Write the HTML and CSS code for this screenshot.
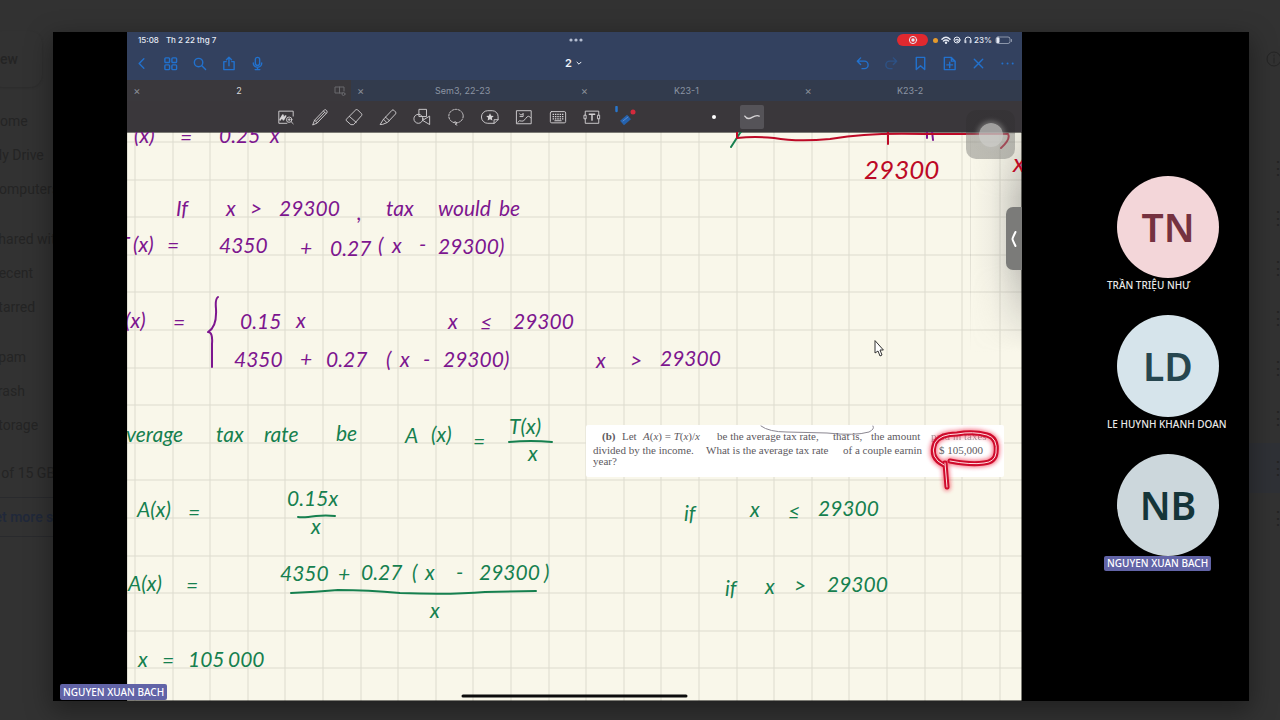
FILE: index.html
```html
<!DOCTYPE html>
<html lang="vi">
<head>
<meta charset="utf-8">
<title>Meeting recording</title>
<link rel="stylesheet" href="styles.css">
</head>
<body>
<div class="drive">
  <nav class="drive-nav">
    <button class="drive-new">New</button>
    <a href="#">Home</a>
    <a href="#">My Drive</a>
    <a href="#">Computers</a>
    <a href="#" class="group">Shared with me</a>
    <a href="#">Recent</a>
    <a href="#">Starred</a>
    <a href="#" class="group">Spam</a>
    <a href="#">Trash</a>
    <a href="#">Storage</a>
    <div class="quota">2 of 15 GB used</div>
    <button class="drive-more">Get more storage</button>
  </nav>
  <div class="drive-rows">
    <svg class="info" viewBox="0 0 16 16"><circle cx="8" cy="8" r="7"/><path d="M8 7v5M8 4v1"/></svg>
    <div class="row">⋮</div><div class="row">⋮</div><div class="row">⋮</div><div class="row">⋮</div>
    <div class="row">⋮</div><div class="row">⋮</div><div class="row selected">⋮</div><div class="row">⋮</div>
  </div>
</div>

<main class="stage">
  <section class="tablet">
    <header class="top">
      <div class="status">
        <span class="clock"><span>15:08</span><span>Th 2 22 thg 7</span></span>
        <svg class="dots" viewBox="0 0 14 4"><circle cx="2" cy="2" r="1.6"/><circle cx="7" cy="2" r="1.6"/><circle cx="12" cy="2" r="1.6"/></svg>
        <span class="indicators">
          <span class="rec"><svg viewBox="0 0 10 10"><circle cx="5" cy="5" r="3.6"/><circle class="fill" cx="5" cy="5" r="1.7"/></svg></span>
          <span class="mic-on"></span>
          <svg viewBox="0 0 10 10"><path d="M1 4.2C3.400 1.900 6.600 1.900 9 4.200M2.500 6C4 4.700 6 4.700 7.500 6" stroke-width="1.500"/><circle class="fill" cx="5" cy="7.700" r="1.200"/></svg>
          <svg viewBox="0 0 10 10"><circle cx="5" cy="5" r="3"/><path d="M3.800 5.400v-1h2.400v2H5"/></svg>
          <svg viewBox="0 0 10 10"><path d="M2 7.500V5a3 3 0 0 1 6 0v2.500M2.800 5.600v2.200M7.200 5.600v2.200"/></svg>
          <span>23%</span>
          <svg class="battery" viewBox="0 0 18 10"><rect x="1" y="2" width="14" height="6.500" rx="2" opacity=".5"/><rect class="fill" x="1.500" y="2.500" width="3" height="5.500" rx="1"/><path d="M16.500 4.500v2" opacity=".5"/></svg>
        </span>
      </div>
      <div class="nav">
        <div class="nav-group">
          <button aria-label="Back"><svg viewBox="0 0 16 16"><path d="M10.500 3 5.500 8l5 5"/></svg></button>
          <button aria-label="Pages"><svg viewBox="0 0 16 16"><rect x="2" y="2" width="5" height="5" rx="1"/><rect x="9.500" y="2" width="5" height="5" rx="1"/><rect x="2" y="9.500" width="5" height="5" rx="1"/><rect x="9.500" y="9.500" width="5" height="5" rx="1"/></svg></button>
          <button aria-label="Search"><svg viewBox="0 0 16 16"><circle cx="7" cy="7" r="4.500"/><path d="m10.500 10.500 4 4"/></svg></button>
          <button aria-label="Share"><svg viewBox="0 0 16 16"><path d="M5.500 6H3v8.500h11V6h-2.500M8.500 10.500V1.500M5.800 4l2.700-2.700L11.200 4"/></svg></button>
          <button aria-label="Record"><svg viewBox="0 0 16 16"><rect x="5.700" y="1.500" width="4.600" height="8.500" rx="2.300"/><path d="M3.500 7.500a4.500 4.500 0 0 0 9 0M8 12v2.500M5.500 14.500h5"/></svg></button>
        </div>
        <button class="doc-title">2 <svg viewBox="0 0 8 8"><path d="m2 3.200 2 2 2-2"/></svg></button>
        <div class="nav-group">
          <button aria-label="Undo"><svg viewBox="0 0 16 16"><path d="M6 2 2.500 5.500 6 9M2.500 5.500H10a3.800 3.800 0 0 1 0 8H7.500"/></svg></button>
          <button aria-label="Redo" class="off"><svg viewBox="0 0 16 16"><path d="m10 2 3.500 3.500L10 9M13.500 5.500H6a3.800 3.800 0 0 0 0 8h2.500"/></svg></button>
          <button aria-label="Bookmark"><svg viewBox="0 0 16 16"><path d="M3.500 1.500h9v13L8 10.500l-4.500 4z"/></svg></button>
          <button aria-label="Add page"><svg viewBox="0 0 16 16"><path d="M2.500 1.500h7.500L14 5.500v9H2.500zM10 1.500v4h4M8.200 6.500v6M5.200 9.500h6"/></svg></button>
          <button aria-label="Close"><svg viewBox="0 0 16 16"><path d="m3.500 3.500 9 9M12.500 3.500l-9 9"/></svg></button>
          <button aria-label="More"><svg viewBox="0 0 16 16"><path class="more" d="M2.500 8h.1M8 8h.1M13.500 8h.1"/></svg></button>
        </div>
      </div>
    </header>

    <div class="tabs">
      <div class="tab active"><button class="x" aria-label="Close tab">×</button><button class="name">2</button><svg class="split" viewBox="0 0 12 10"><path d="M9 7H1V1h9v4M5.500 1v6"/><circle cx="9.500" cy="8" r="1.500"/></svg></div>
      <div class="tab"><button class="x" aria-label="Close tab">×</button><button class="name">Sem3, 22-23</button></div>
      <div class="tab"><button class="x" aria-label="Close tab">×</button><button class="name">K23-1</button></div>
      <div class="tab"><button class="x" aria-label="Close tab">×</button><button class="name">K23-2</button></div>
    </div>

    <div class="tools">
      <button aria-label="Zoom window"><svg viewBox="0 0 20 20"><path d="M18 9V3.500H2V17h9"/><path d="m3.500 13 3-5 .500 5 2.500-4" stroke-width="2"/><circle cx="13.500" cy="13" r="3"/><path d="M12.200 13h2.600M13.500 11.700v2.600M16 15.500l2 2"/></svg></button>
      <button aria-label="Pen"><svg viewBox="0 0 20 20"><path d="m2 18.500 2-5L15 2q1.500-.500 2.500 1T17.500 5.500L7 16.500zM4 13.500l3 3M14 3.500l2.500 2.500M6 14.500l9-9.500"/></svg></button>
      <button aria-label="Eraser"><svg viewBox="0 0 20 20"><path d="M1.500 12.500 12 2q1-.500 2 0l4.500 4.500q.500 1 0 1.800L9.500 18.500H6.500L1.500 14zM5 9.500l7.500 6.500"/></svg></button>
      <button aria-label="Highlighter"><svg viewBox="0 0 20 20"><path d="m1.500 18 3.500-5.500L14.500 2.500q1-1 2 0l2 2q.500 1 0 2L9.500 16l-5 2zM5 12.500 8.500 16M7 10l4.500 4"/></svg></button>
      <button aria-label="Shapes"><svg viewBox="0 0 20 20"><rect x="7" y="1.500" width="8" height="8"/><circle cx="6" cy="12" r="5"/><path d="m11 13.500 7.500-4.500v9z"/></svg></button>
      <button aria-label="Lasso"><svg viewBox="0 0 20 20"><ellipse cx="10" cy="9" rx="8" ry="7.500" stroke-dasharray="2 1.500"/><path d="M7.500 16q2-1.500 3 0t-1 1.500 1.500 1.500"/></svg></button>
      <button aria-label="Elements"><svg viewBox="0 0 20 20"><path d="M14.500 17H7.500a6.500 6.500 0 0 1 0-14h5a6.500 6.500 0 0 1 6.500 6.500v3zM14.500 17v-4h4.500"/><path class="fill" d="m10 5.800 1.300 2.700 2.900.400-2.100 2 .500 2.900-2.600-1.400-2.600 1.400.500-2.900-2.100-2 2.900-.400z"/></svg></button>
      <button aria-label="Image"><svg viewBox="0 0 20 20"><rect x="2" y="3" width="16" height="14.500"/><path d="M3 16q2-3 4-1.500t5-3 5.500-.500M5 6.500q1 3 3.500.500M9 6v3.500H5.500"/></svg></button>
      <button aria-label="Keyboard"><svg viewBox="0 0 20 20"><rect x="1.500" y="4" width="17" height="12.500" rx="1.500"/><path d="M4 7h12M4 9.500h12M4 12h12" stroke-width="1.500" stroke-linecap="butt" stroke-dasharray="1.600 1"/><path d="M6.500 14.200h7" stroke-width="1.200"/></svg></button>
      <button aria-label="Text"><svg viewBox="0 0 20 20"><path d="M2.500 8V3.500h15V8M2.500 12v5h15v-5M1.500 8h2v4h-2zM16.500 8h2v4h-2z"/><path d="M7 7h6M10 7v6.500" stroke-width="1.600"/></svg></button>
      <button aria-label="Laser pointer"><svg class="laser" viewBox="0 0 22 22"><path d="m7 17 7-6" stroke="#2562ad" stroke-width="6" stroke-linecap="butt"/><path d="m8 15 5-4" stroke="#5a8bd0" stroke-width="1"/><circle cx="18" cy="6" r="2.500" fill="#d42a3c" stroke="none"/><path d="m1.500 1v4" stroke="#2876cc" stroke-width="2.500"/></svg></button>
      <button class="dot" aria-label="Dot"><span></span></button>
      <button class="trail" aria-label="Trail"><svg viewBox="0 0 20 20"><path d="M2 9q3 4.500 8 1.500t8-1.500" stroke-width="1.500"/></svg></button>
    </div>

    <div class="canvas">
      <svg class="page" viewBox="127 132 895 569" preserveAspectRatio="xMinYMin slice">
        <defs>
          <pattern id="grid" x="135" y="142" width="188" height="188" patternUnits="userSpaceOnUse">
            <path d="M0 0V188M38 0V188M75 0V188M113 0V188M150 0V188M188 0V188M0 0H188M0 38H188M0 75H188M0 113H188M0 150H188M0 188H188"/>
          </pattern>
          <linearGradient id="edge"><stop offset="0" stop-color="#888" stop-opacity="0"/><stop offset=".4" stop-color="#888" stop-opacity=".08"/><stop offset="1" stop-color="#777" stop-opacity=".4"/></linearGradient>
          <linearGradient id="fade" x2="0" y2="1"><stop offset="0" stop-color="#555"/><stop offset=".3" stop-color="#fff"/><stop offset=".6" stop-color="#fff"/><stop offset="1" stop-color="#000"/></linearGradient>
          <mask id="shade"><rect x="970" y="132" width="52" height="220" fill="url(#fade)"/></mask>
          <filter id="glow" x="-30%" y="-30%" width="160%" height="160%"><feGaussianBlur stdDeviation="2"/></filter>
        </defs>
        <rect x="127" y="132" width="895" height="569" fill="url(#grid)"/>
        <rect x="970" y="132" width="52" height="220" fill="url(#edge)" mask="url(#shade)"/>

        <g class="ink purple">
          <text x="134" y="143">(x)</text><text x="180" y="145">=</text><text x="219" y="143">0.25</text><text x="270" y="143">x</text>
          <text x="176" y="216">If</text><text x="226" y="216">x</text><text x="250" y="216">&gt;</text><text x="279" y="216">29300</text><text x="357" y="220">,</text><text x="386" y="216">tax</text><text x="438" y="216">would</text><text x="499" y="216">be</text>
          <text x="118" y="252">T</text><text x="133" y="252">(x)</text><text x="167" y="253">=</text><text x="219" y="253">4350</text><text x="300" y="256">+</text><text x="330" y="256">0.27</text><text x="378" y="253">(</text><text x="392" y="253">x</text><text x="419" y="252">-</text><text x="438" y="254">29300)</text>
          <text x="125" y="328">(x)</text><text x="173" y="330">=</text><text x="240" y="329">0.15</text><text x="296" y="328">x</text><text x="448" y="329">x</text><text x="480" y="330">≤</text><text x="513" y="329">29300</text>
          <text x="234" y="367">4350</text><text x="300" y="367">+</text><text x="326" y="367">0.27</text><text x="386" y="367">(</text><text x="400" y="367">x</text><text x="423" y="367">-</text><text x="443" y="367">29300)</text><text x="596" y="368">x</text><text x="630" y="368">&gt;</text><text x="660" y="366">29300</text>
          <path d="M218 297q-3 2-2 12 1 18-8 23 5 0 4 12v23M927 131v7M932 131l1 9"/>
        </g>
        <g class="ink green">
          <text x="126" y="442">verage</text><text x="216" y="442">tax</text><text x="264" y="442">rate</text><text x="336" y="441">be</text><text x="405" y="443">A</text><text x="431" y="442">(x)</text><text x="473" y="449">=</text><text x="509" y="434">T(x)</text><text x="528" y="461">x</text>
          <text x="137" y="517">A(x)</text><text x="188" y="520">=</text><text x="287" y="506">0.15x</text><text x="311" y="534">x</text>
          <text x="128" y="591">A(x)</text><text x="186" y="593">=</text><text x="280" y="581">4350</text><text x="338" y="582">+</text><text x="361" y="580">0.27</text><text x="412" y="580">(</text><text x="425" y="580">x</text><text x="456" y="580">-</text><text x="479" y="580">29300</text><text x="544" y="580">)</text><text x="430" y="618">x</text>
          <text x="138" y="667">x</text><text x="162" y="668">=</text><text x="188" y="667">105</text><text x="228" y="667">000</text>
          <text x="684" y="521">if</text><text x="750" y="517">x</text><text x="788" y="519">≤</text><text x="818" y="516">29300</text>
          <text x="725" y="596">if</text><text x="765" y="594">x</text><text x="794" y="593">&gt;</text><text x="827" y="592">29300</text>
          <path d="M509 442q22-2 43 0M298 517q5 1 18-1 10-1 19 0M291 593q25-1 47-3 30 0 62 3 50 2 85-1l51-1M731 147l9-14q3-4 5-2"/>
        </g>
        <g class="ink red">
          <text class="large" x="864" y="179">29300</text><text class="large" x="1013" y="172">x</text>
          <path d="M737 131v7q18-2 37 0 23 4 56 1 18-3 34-4 25-2 60-1h84q3 5-7 14M888 132v12"/>
        </g>

        <rect class="clip" x="586" y="425" width="418" height="52" rx="2"/>
        <path class="scribble" d="M761 426q8 6 26 6l40 1q28 3 42-1 6-3 4-6"/>
        <g class="print">
          <text y="440"><tspan x="602" class="label">(b)</tspan><tspan x="622">Let</tspan><tspan x="643" class="var">A</tspan>(<tspan class="var">x</tspan>) = <tspan class="var">T</tspan>(<tspan class="var">x</tspan>)/<tspan class="var">x</tspan><tspan x="717">be the average tax rate,</tspan><tspan x="833">that is,</tspan><tspan x="871">the amount</tspan></text>
          <text class="faint" x="931" y="440">paid in taxes</text>
          <text y="454"><tspan x="593">divided by the income.</tspan><tspan x="706">What is the average tax rate</tspan><tspan x="843">of a couple earnin</tspan></text>
          <text x="593" y="465">year?</text>
        </g>
        <g class="lasso">
          <path class="glow" d="M944 465q-15-7-9-22 5-9 22-9 16-3 30 1 11 3 9 18-1 9-12 10-13 2-34-2M945 463l2 24"/>
          <path class="body" d="M944 465q-15-7-9-22 5-9 22-9 16-3 30 1 11 3 9 18-1 9-12 10-13 2-34-2M945 463l2 24"/>
          <path class="core" d="M944 465q-15-7-9-22 5-9 22-9 16-3 30 1 11 3 9 18-1 9-12 10-13 2-34-2M945 463l2 24"/>
        </g>
        <g class="print"><text x="939" y="454">$ 105,000</text></g>
        <path class="home-bar" d="M463 696H686"/>
        <path class="cursor" d="M875 341v12l3-2 2 5 2-1-2-5h3z"/>
      </svg>
      <button class="drawer" aria-label="Open panel"><svg viewBox="0 0 10 20"><path d="M6.500 3q-3 6-3 7t3 7"/></svg></button>
    </div>
    <button class="assist" aria-label="Assistive touch"><span></span></button>
  </section>

  <aside class="people">
    <figure class="person rose"><div class="avatar">TN</div><figcaption>TRẦN TRIỆU NHƯ</figcaption></figure>
    <figure class="person sky"><div class="avatar">LD</div><figcaption>LE HUYNH KHANH DOAN</figcaption></figure>
    <figure class="person slate"><div class="avatar">NB</div><figcaption class="speaking">NGUYEN XUAN BACH</figcaption></figure>
  </aside>
  <div class="presenter speaking">NGUYEN XUAN BACH</div>
</main>
</body>
</html>
```
FILE: styles.css
```css
* { box-sizing: border-box; }
body {
  margin: 0;
  height: 100vh;
  overflow: hidden;
  background: #323232;
  font-family: Inter, "Liberation Sans", sans-serif;
}
button { border: 0; padding: 0; margin: 0; background: none; color: inherit; font: inherit; }
svg { display: block; fill: none; stroke: currentColor; stroke-linecap: round; stroke-linejoin: round; }

/* File list behind the player */
.drive {
  position: absolute;
  inset: 0;
  display: flex;
  justify-content: space-between;
  overflow: hidden;
  color: #242424;
  font: 14px/20px Roboto, sans-serif;
}
.drive-nav { display: flex; flex-direction: column; align-items: flex-start; gap: 14px; margin-left: -10px; padding-top: 31px; white-space: nowrap; }
.drive-nav a { color: inherit; text-decoration: none; }
.drive-nav .group { margin-top: 16px; }
.drive-new { height: 56px; width: 52px; margin-bottom: 10px; border-radius: 12px; text-align: left; font-weight: 500; box-shadow: 0 1px 2px #2c2c2c; }
.quota { margin-top: 14px; }
.drive-more { height: 40px; margin-left: -24px; padding: 0 18px; border: 1px solid #292a2d; border-radius: 20px; color: #20283a; font-weight: 500; }
.drive-rows { width: 31px; padding-top: 51px; }
.info { width: 16px; margin: 0 0 76px 17px; }
.row { height: 50px; padding-left: 20px; font-size: 18px; line-height: 50px; }
.row.selected { background: #2f3136; }

/* Player */
.stage {
  position: relative;
  display: flex;
  height: calc(100vh - 51px);
  margin: 32px 31px 19px 53px;
  padding-left: 74px;
  background: #000;
  box-shadow: 0 8px 24px 2px rgba(0, 0, 0, .35);
}
.tablet { position: relative; flex: 1; min-width: 0; display: flex; flex-direction: column; }

.top { background: #33415f; color: #e6ebf5; }
.status { display: grid; grid-template-columns: 1fr auto 1fr; align-items: center; height: 16px; padding: 0 9px 0 11px; font-size: 8px; font-weight: 500; line-height: 16px; }
.clock { display: flex; gap: 7px; }
.dots { width: 14px; color: #b4bdd0; fill: currentColor; stroke: none; }
.indicators { display: flex; justify-content: flex-end; align-items: center; gap: 1px; }
.indicators svg { width: 10px; height: 10px; }
.indicators .battery { width: 18px; margin-left: 2px; }
.fill { fill: currentColor; stroke: none; }
.rec { display: grid; place-items: center; width: 31px; height: 12px; margin-right: 4px; border-radius: 6px; background: #e0292f; }
.mic-on { width: 5px; height: 5px; margin-right: 2px; border-radius: 50%; background: #e69a2c; }
.nav { display: grid; grid-template-columns: 1fr auto 1fr; align-items: center; height: 32px; padding: 0 5px 2px 4px; color: #2271cd; }
.nav-group { display: flex; gap: 9px; }
.nav-group:last-child { justify-content: flex-end; }
.nav-group button { display: grid; place-items: center; width: 20px; height: 24px; }
.nav-group svg { width: 15px; height: 15px; stroke-width: 1.5; }
.nav-group .off { opacity: .35; }
.nav-group .more { stroke-width: 2; }
.doc-title { display: flex; align-items: center; gap: 3px; color: #f0f4fb; font-size: 11px; font-weight: 600; }
.doc-title svg { width: 8px; }

.tabs { display: grid; grid-template-columns: repeat(4, 1fr); height: 21px; background: #323b4d; color: #8c95a4; font-size: 9px; }
.tab { display: grid; grid-template-columns: 20px 1fr 20px; align-items: center; }
.tab.active { background: #3a383c; color: #d8d8da; }
.x { color: #8a8f98; font-size: 11px; line-height: 20px; }
.split { width: 12px; margin-left: 3px; color: #68686c; }

.tools { display: flex; align-items: center; gap: 12px; height: 31px; padding-left: 148px; background: #3a373b; color: #d6d4d6; }
.tools button { display: grid; place-items: center; width: 22px; height: 24px; }
.tools svg { width: 18px; height: 18px; stroke-width: 1; }
.tools .laser { width: 22px; height: 22px; }
.tools .dot { margin-left: 54px; }
.dot span { width: 4px; height: 4px; border-radius: 50%; background: #fff; }
.tools .trail { width: 24px; margin-left: 3px; border-radius: 2px; background: #555358; }

.canvas { position: relative; flex: 1; min-height: 0; overflow: hidden; background: #f9f7ea; }
.page { width: 100%; height: 100%; }
pattern path { stroke: #dddbce; stroke-width: 1; }
.ink { stroke-width: 2; }
.ink text { fill: currentColor; stroke: none; font: italic 21px Lato, "Open Sans", sans-serif; }
.ink .large { font-size: 26px; }
.purple { color: #7d168f; }
.green { color: #16804f; }
.red { color: #bd0926; }
.clip { fill: #fff; stroke: none; }
.scribble { stroke: #8b8791; }
.print text { fill: #5d5960; stroke: none; font: 11px "Liberation Serif", serif; }
.print .label { font-weight: bold; }
.print .var { font-style: italic; }
.print .faint { opacity: .6; }
.lasso .glow { stroke: #f0203c; stroke-width: 7; opacity: .65; filter: url(#glow); }
.lasso .body { stroke: #cf0b2c; stroke-width: 5; }
.lasso .core { stroke: #ffdfe2; stroke-width: 1; }
.home-bar { stroke: #0c0c0c; stroke-width: 3; }
.cursor { fill: #fff; stroke: #333; stroke-width: 1; }
.drawer { position: absolute; top: 75px; right: 0; display: grid; place-items: center; width: 16px; height: 63px; border-radius: 7px 0 0 7px; background: #7b7b79; color: #fff; }
.drawer svg { width: 10px; stroke-width: 2; }
.assist { position: absolute; top: 78px; right: 7px; display: grid; place-items: center; width: 49px; height: 49px; border-radius: 10px; background: linear-gradient(rgba(50, 48, 50, .5) 44%, rgba(130, 130, 126, .5) 50%); }
.assist span { width: 24px; height: 24px; border-radius: 50%; background: rgba(205, 205, 203, .7); box-shadow: 0 0 5px 2px rgba(190, 190, 188, .4); }

.people { display: flex; flex-direction: column; gap: 22px; width: 227px; padding: 144px 0 0 82px; color: #e8e8e8; font: 10px/15px "Noto Sans", "Open Sans", sans-serif; }
.person { display: flex; flex-direction: column; align-items: flex-start; margin: 0; }
.avatar { display: grid; place-items: center; width: 102px; height: 102px; margin-left: 13px; border-radius: 50%; font-size: 39px; font-weight: 600; line-height: 48px; }
.rose .avatar { background: #f3d6d9; color: #753240; }
.sky .avatar { background: #d6e4eb; color: #27464f; }
.slate .avatar { background: #ccd7dc; color: #153539; }
figcaption { padding: 0 3px; font-weight: 500; white-space: nowrap; }
.speaking { border-radius: 2px; background: #6264a7; color: #fff; }
.presenter { position: absolute; left: 7px; bottom: 1px; padding: 0 3px; font: 500 10px/16px "Noto Sans", "Open Sans", sans-serif; }
```
